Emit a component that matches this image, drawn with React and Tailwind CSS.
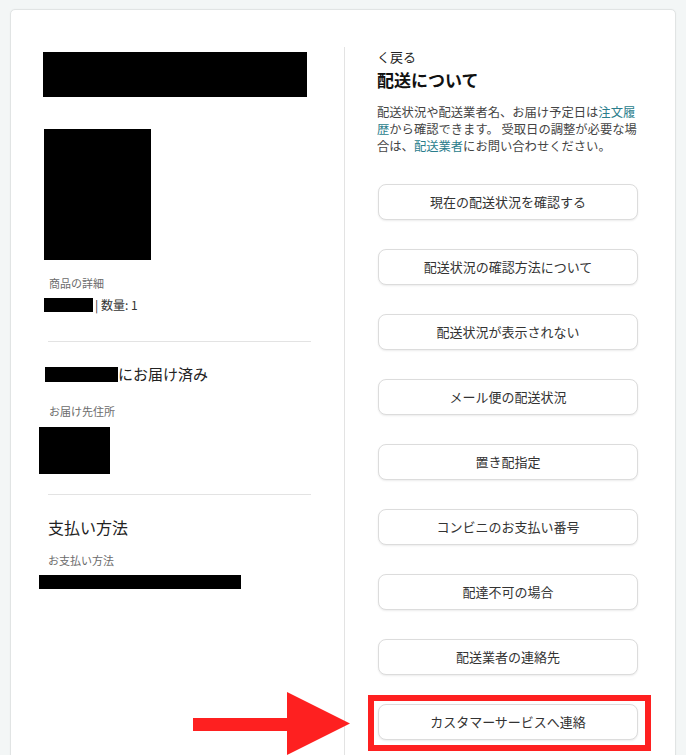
import React from 'react';

const buttons = [
  '現在の配送状況を確認する',
  '配送状況の確認方法について',
  '配送状況が表示されない',
  'メール便の配送状況',
  '置き配指定',
  'コンビニのお支払い番号',
  '配達不可の場合',
  '配送業者の連絡先',
  'カスタマーサービスへ連絡',
];

const font = { fontFamily: '"Noto Sans CJK JP", "Noto Sans", sans-serif' };

const App = () => {
  return (
    <div
      className="relative h-[755px] overflow-hidden bg-[#f3f6f6] pt-[9px] px-[10px]"
      style={font}
    >
      <div className="flex h-[800px] rounded-[5px] border border-[#e1e4e4] bg-white pt-[37px] shadow-[0_0_2px_rgba(0,0,0,0.04)]">
        {/* left column */}
        <div className="w-[333px] shrink-0 pl-[32px]">
          <div className="mt-[5px] h-[45px] w-[264px] bg-black"></div>
          <div className="ml-[1px] mt-[32px] h-[131px] w-[107px] bg-black"></div>
          <div className="ml-[6px] mt-[15px] text-[11px] leading-[16px] text-[#6b6b6b]">商品の詳細</div>
          <div className="ml-[1px] mt-[6px] flex items-center text-[12px] leading-[16px] text-[#333]">
            <span className="inline-block h-[14px] w-[49px] bg-black"></span>
            <span className="ml-[2px]">| 数量: 1</span>
          </div>
          <div className="ml-[5px] mt-[28px] w-[263px] border-t border-[#e3e3e3]"></div>
          <div className="ml-[2px] mt-[22px] flex items-center text-[15px] leading-[20px] text-[#222]">
            <span className="inline-block h-[15px] w-[73px] bg-black"></span>
            <span>にお届け済み</span>
          </div>
          <div className="ml-[6px] mt-[19px] text-[11px] leading-[16px] text-[#6b6b6b]">お届け先住所</div>
          <div className="-ml-[4px] mt-[8px] h-[47px] w-[71px] bg-black"></div>
          <div className="ml-[5px] mt-[20px] w-[263px] border-t border-[#e3e3e3]"></div>
          <div className="ml-[5px] mt-[21px] text-[16px] leading-[22px] text-[#222]">支払い方法</div>
          <div className="ml-[5px] mt-[14px] text-[11px] leading-[16px] text-[#6b6b6b]">お支払い方法</div>
          <div className="-ml-[4px] mt-[7px] h-[14px] w-[202px] bg-black"></div>
        </div>

        {/* right column */}
        <div className="flex-1 border-l border-[#e3e3e3] pl-[32px] pt-[1px]">
          <div className="text-[13px] leading-[18px] text-[#222]">く戻る</div>
          <h1 className="mt-[2px] text-[17px] font-bold leading-[24px] text-[#111]">配送について</h1>
          <p className="mt-[12px] whitespace-nowrap text-[12.3px] leading-[17px] text-[#444]">
            配送状況や配送業者名、お届け予定日は<span className="text-[#2a7d8c]">注文履</span>
            <br />
            <span className="text-[#2a7d8c]">歴</span>から確認できます。 受取日の調整が必要な場
            <br />
            合は、<span className="text-[#2a7d8c]">配送業者</span>にお問い合わせください。
          </p>
          <div className="mt-[29px] flex flex-col gap-[29px]">
            {buttons.map((label) => (
              <button
                key={label}
                className="ml-[1px] flex h-[36px] w-[260px] items-center justify-center rounded-[8px] border border-[#dcdcdc] bg-white text-[13px] text-[#333] shadow-[0_1px_2px_rgba(0,0,0,0.08)]"
              >
                {label}
              </button>
            ))}
          </div>
        </div>
      </div>

      {/* annotation: red box */}
      <div className="absolute left-[368px] top-[695px] h-[56px] w-[283px] border-[6px] border-[#fe2020]"></div>

      {/* annotation: arrow */}
      <svg className="absolute left-0 top-0" width="686" height="755" viewBox="0 0 686 755">
        <rect x="193" y="718" width="96" height="13" fill="#fe2020" />
        <polygon points="287,692 350,723.5 287,755" fill="#fe2020" />
      </svg>
    </div>
  );
};

export default App;
